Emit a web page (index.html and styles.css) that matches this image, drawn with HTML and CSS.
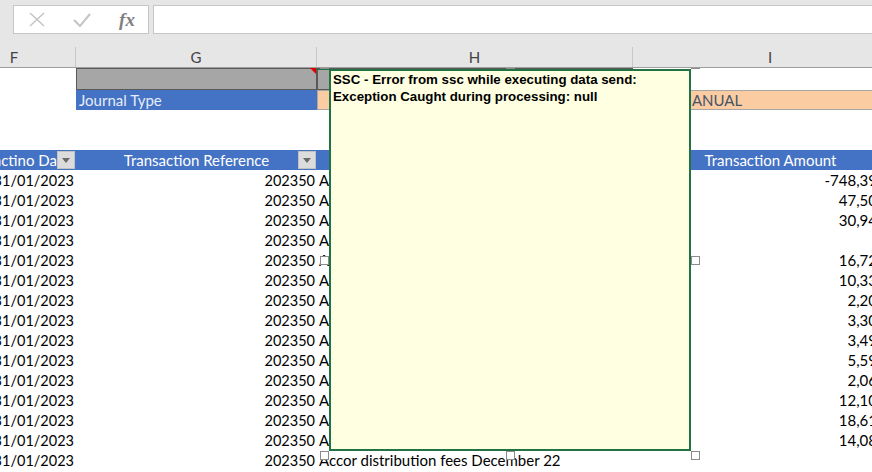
FILE: index.html
```html
<!DOCTYPE html>
<html>
<head>
<meta charset="utf-8">
<link rel="stylesheet" href="styles.css">
</head>
<body>
<div class="fbar">
  <div class="fbtns">
    <svg class="ic" width="16" height="15" viewBox="0 0 16 15"><path d="M1 1 L15 14 M15 1 L1 14" stroke="#c4c4c4" stroke-width="1.5" fill="none"/></svg>
    <svg class="ic" width="18" height="14" viewBox="0 0 18 14"><path d="M1 7 L7 13 L17 1" stroke="#c4c4c4" stroke-width="2" fill="none"/></svg>
    <span class="fx">fx</span>
  </div>
  <div class="finput"></div>
</div>
<div class="sheet">
  <div class="row colhdr">
    <div class="cell">F</div>
    <div class="cell">G</div>
    <div class="cell">H</div>
    <div class="cell">I</div>
  </div>
  <div class="row r1">
    <div class="cell"></div>
    <div class="cell gray"></div>
    <div class="cell gray"></div>
    <div class="cell"></div>
  </div>
  <div class="row">
    <div class="cell"></div>
    <div class="cell blue">Journal Type</div>
    <div class="cell orange span2">MANUAL</div>
  </div>
  <div class="row"></div>
  <div class="row"></div>
  <div class="row thead">
    <div class="cell ctr">Transactino Date<span class="dd"></span></div>
    <div class="cell ctr">Transaction Reference<span class="dd"></span></div>
    <div class="cell ctr">Transaction Description<span class="dd"></span></div>
    <div class="cell ctr">Transaction Amount</div>
  </div>
  <div class="row"><div class="cell num">31/01/2023</div><div class="cell num">202350</div><div class="cell txt">Accor distribution fees December 22</div><div class="cell amt">-748,39</div></div>
  <div class="row"><div class="cell num">31/01/2023</div><div class="cell num">202350</div><div class="cell txt">Accor distribution fees December 22</div><div class="cell amt">47,50</div></div>
  <div class="row"><div class="cell num">31/01/2023</div><div class="cell num">202350</div><div class="cell txt">Accor distribution fees December 22</div><div class="cell amt">30,94</div></div>
  <div class="row"><div class="cell num">31/01/2023</div><div class="cell num">202350</div><div class="cell txt">Accor distribution fees December 22</div><div class="cell amt"></div></div>
  <div class="row"><div class="cell num">31/01/2023</div><div class="cell num">202350</div><div class="cell txt">Accor distribution fees December 22</div><div class="cell amt">16,72</div></div>
  <div class="row"><div class="cell num">31/01/2023</div><div class="cell num">202350</div><div class="cell txt">Accor distribution fees December 22</div><div class="cell amt">10,33</div></div>
  <div class="row"><div class="cell num">31/01/2023</div><div class="cell num">202350</div><div class="cell txt">Accor distribution fees December 22</div><div class="cell amt">2,20</div></div>
  <div class="row"><div class="cell num">31/01/2023</div><div class="cell num">202350</div><div class="cell txt">Accor distribution fees December 22</div><div class="cell amt">3,30</div></div>
  <div class="row"><div class="cell num">31/01/2023</div><div class="cell num">202350</div><div class="cell txt">Accor distribution fees December 22</div><div class="cell amt">3,49</div></div>
  <div class="row"><div class="cell num">31/01/2023</div><div class="cell num">202350</div><div class="cell txt">Accor distribution fees December 22</div><div class="cell amt">5,59</div></div>
  <div class="row"><div class="cell num">31/01/2023</div><div class="cell num">202350</div><div class="cell txt">Accor distribution fees December 22</div><div class="cell amt">2,06</div></div>
  <div class="row"><div class="cell num">31/01/2023</div><div class="cell num">202350</div><div class="cell txt">Accor distribution fees December 22</div><div class="cell amt">12,10</div></div>
  <div class="row"><div class="cell num">31/01/2023</div><div class="cell num">202350</div><div class="cell txt">Accor distribution fees December 22</div><div class="cell amt">18,61</div></div>
  <div class="row"><div class="cell num">31/01/2023</div><div class="cell num">202350</div><div class="cell txt">Accor distribution fees December 22</div><div class="cell amt">14,08</div></div>
  <div class="row"><div class="cell num">31/01/2023</div><div class="cell num">202350</div><div class="cell txt">Accor distribution fees December 22</div><div class="cell amt"></div></div>

  <span class="indicator"></span>
  <span class="connector"></span>
  <div class="comment">SSC - Error from ssc while executing data send:<br>Exception Caught during processing: null</div>
  <span class="handle h-tl"></span>
  <span class="handle h-tm"></span>
  <span class="handle h-tr"></span>
  <span class="handle h-ml"></span>
  <span class="handle h-mr"></span>
  <span class="handle h-bl"></span>
  <span class="handle h-bm"></span>
  <span class="handle h-br"></span>
</div>
</body>
</html>
```
FILE: styles.css
```css
html, body {
  margin: 0;
  padding: 0;
}
body {
  width: 872px;
  height: 472px;
  overflow: hidden;
  background: #fff;
  font-family: Lato, "Liberation Sans", sans-serif;
}

/* formula bar */
.fbar {
  height: 47px;
  box-sizing: border-box;
  background: #e6e6e6;
  display: flex;
  align-items: flex-start;
  gap: 4px;
  padding: 5px 0 0 13px;
}
.fbtns {
  width: 136px;
  height: 29px;
  box-sizing: border-box;
  border: 1px solid #c6c6c6;
  background: #fff;
  display: grid;
  grid-template-columns: 45px 46px 44px;
  align-items: center;
  justify-items: center;
}
.ic { display: block; }
.fx {
  font-family: "Liberation Serif", serif;
  font-style: italic;
  font-weight: bold;
  font-size: 19px;
  color: #808080;
  line-height: 20px;
}
.finput {
  flex: 1;
  height: 29px;
  box-sizing: border-box;
  border: 1px solid #c6c6c6;
  border-right: none;
  background: #fff;
}

/* sheet grid */
.sheet {
  position: relative;
}
.row {
  display: grid;
  grid-template-columns: 123px 241px 316px 275px;
  margin-left: -47px;
  height: 20px;
}
.cell {
  position: relative;
  overflow: hidden;
  white-space: nowrap;
  box-sizing: border-box;
  font-size: 15px;
  line-height: 21px;
  color: #000;
}

.colhdr {
  position: relative;
  z-index: 3;
  height: 21px;
  box-sizing: border-box;
  background: #e6e6e6;
  border-bottom: 1px solid #9e9e9e;
}
.colhdr .cell {
  text-align: center;
  border-right: 1px solid #c8c8c8;
  color: #444;
  font-size: 15px;
  line-height: 20px;
}

.r1 { height: 22px; }
.gray {
  background: #a6a6a6;
  border: 1px solid #595959;
}
.blue {
  background: #4472c4;
  color: #e6edf8;
  padding-left: 3px;
  line-height: 21px;
}
.orange {
  background: #fbcba2;
  border-top: 1px solid #a6a6a6;
  border-bottom: 1px solid #a6a6a6;
  border-left: 1px solid #a6a6a6;
  color: #44546a;
  padding-left: 360px;
  line-height: 18px;
}
.span2 { grid-column: span 2; }

.thead {
  background: #4472c4;
}
.thead .cell {
  color: #fff;
}
.ctr { text-align: center; }
.dd {
  position: absolute;
  right: 1px;
  top: 1px;
  width: 18px;
  height: 18px;
  box-sizing: border-box;
  background: #dcdcdc;
  border: 1px solid #c2c2c2;
}
.dd::after {
  content: "";
  position: absolute;
  left: 4px;
  top: 6px;
  border-left: 4px solid transparent;
  border-right: 4px solid transparent;
  border-top: 5px solid #6a6a6a;
}

.num {
  text-align: right;
  padding-right: 2px;
  font-size: 14.5px;
}
.txt {
  padding-left: 2px;
}
.amt {
  text-align: right;
  padding-right: 31px;
}

/* comment overlay */
.indicator {
  position: absolute;
  left: 310px;
  top: 21px;
  width: 0;
  height: 0;
  border-top: 6px solid #e00000;
  border-left: 6px solid transparent;
  z-index: 2;
}
.connector {
  position: absolute;
  left: 316px;
  top: 22px;
  width: 14px;
  height: 1px;
  background: #217346;
  z-index: 2;
}
.comment {
  position: absolute;
  left: 329px;
  top: 22px;
  width: 362px;
  height: 382px;
  box-sizing: border-box;
  border: 2px solid #217346;
  background: #ffffe1;
  padding: 0 2px;
  font-family: "Liberation Sans", Arial, sans-serif;
  font-weight: bold;
  font-size: 13.3px;
  line-height: 17px;
  color: #000;
  z-index: 2;
}
.handle {
  position: absolute;
  width: 9px;
  height: 9px;
  box-sizing: border-box;
  border: 1px solid #8c8c8c;
  background: #fff;
  z-index: 2;
}
.h-tl { left: 320px; top: 13px; }
.h-tm { left: 506px; top: 13px; }
.h-tr { left: 691px; top: 13px; }
.h-ml { left: 320px; top: 209px; }
.h-mr { left: 691px; top: 209px; }
.h-bl { left: 320px; top: 404px; }
.h-bm { left: 506px; top: 404px; }
.h-br { left: 691px; top: 404px; }
```
